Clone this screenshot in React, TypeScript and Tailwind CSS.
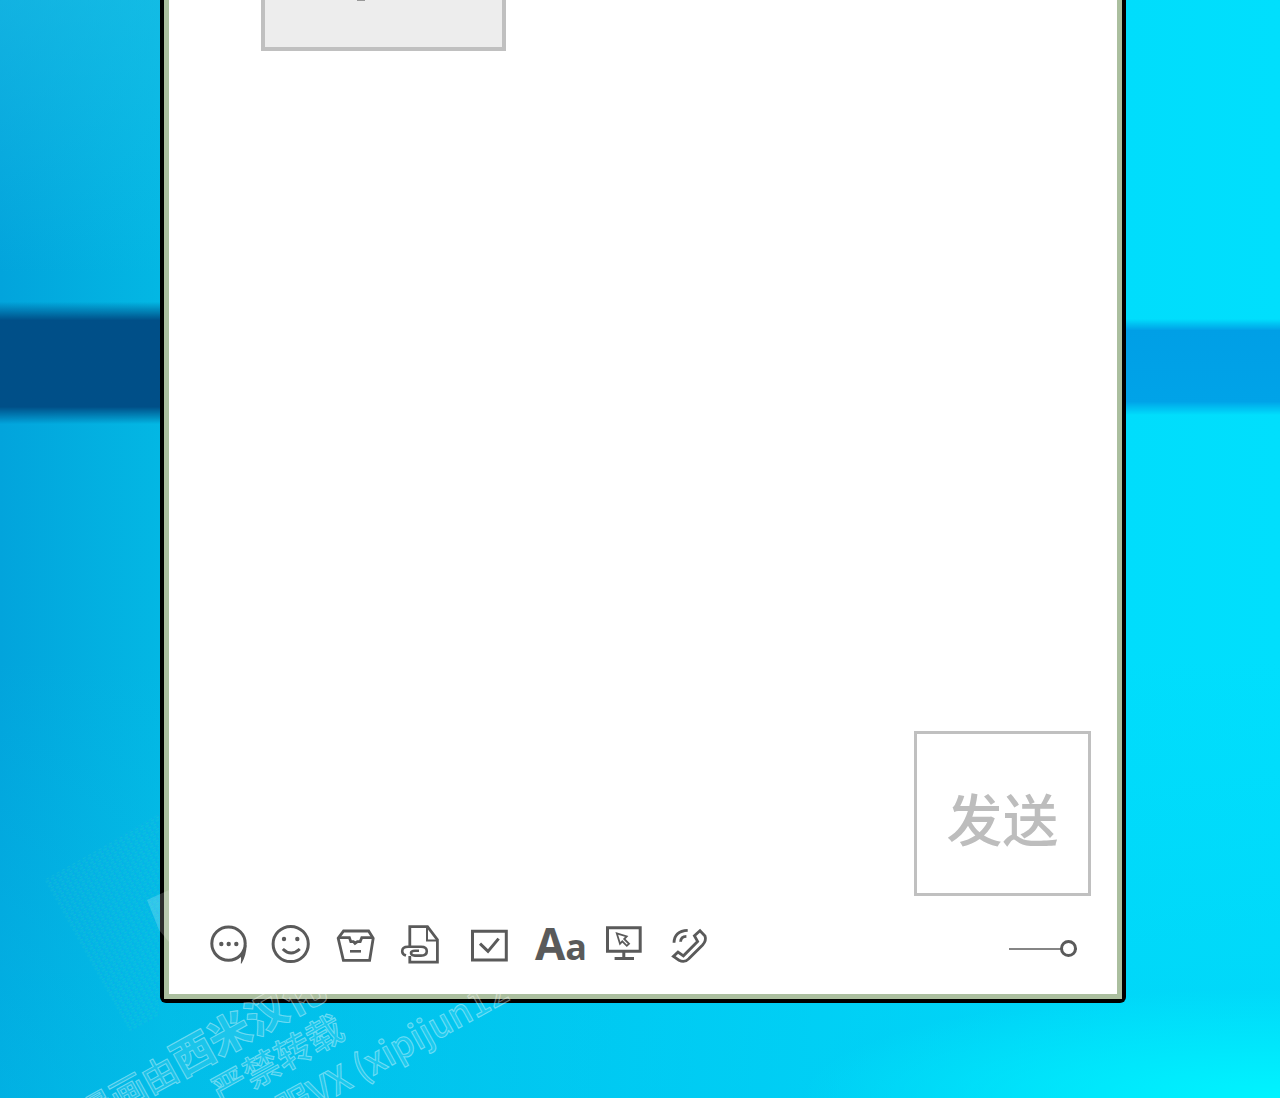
import React, { useState } from 'react';

interface ToolProps {
    label: string;
    className: string;
    children: React.ReactNode;
}

const ToolButton: React.FC<ToolProps> = ({ label, className, children }) => (
    <button
        type="button"
        aria-label={label}
        title={label}
        className={`${className} h-12 shrink-0 cursor-pointer text-[#5a5a5a]`}
    >
        {children}
    </button>
);

const ChatIcon = () => (
    <svg viewBox="0 0 38 48" className="w-full h-12" fill="none" stroke="currentColor" strokeWidth="3">
        <circle cx="19.5" cy="22.6" r="16.7" />
        <path d="M37.6 24Q37.4 34 32.6 42.6L31.8 42.4Q32.6 38 31.6 34.500L35 26Z" fill="currentColor" stroke="none" />
        <g fill="currentColor" stroke="none">
            <circle cx="12.3" cy="23" r="2.2" />
            <circle cx="19.7" cy="23" r="2.2" />
            <circle cx="27.3" cy="23" r="2.2" />
        </g>
    </svg>
);

const SmileIcon = () => (
    <svg viewBox="0 0 40 48" className="w-10 h-12" fill="none" stroke="currentColor" strokeWidth="3">
        <circle cx="19.7" cy="23" r="17.6" />
        <path d="M11.8 28Q20 36 28.8 28" />
        <circle cx="13" cy="18" r="2.2" fill="currentColor" stroke="none" />
        <circle cx="26.3" cy="18" r="2.2" fill="currentColor" stroke="none" />
    </svg>
);

const BoxIcon = () => (
    <svg viewBox="0 0 40 48" className="w-10 h-12" fill="none" stroke="currentColor" strokeWidth="2.8">
        <path d="M3.2 17.2L8.6 10H33.6L38.2 17.2L34.6 39.4H8.4Z" />
        <path d="M3.2 16.6H14.4L15.8 20.6H18.4L20 22.4L22.4 20.6H25.2L26.8 16.6H38" />
        <path d="M15 30.3H26" strokeWidth="2.6" />
    </svg>
);

const FileLinkIcon = () => (
    <svg viewBox="0 0 44 48" className="w-11 h-12" fill="none" stroke="currentColor" strokeWidth="2.8">
        <path d="M10.8 26V5.6H28.5L38.4 18.6V41.2H10.8V35" />
        <path d="M28 6V19.6H38" strokeWidth="2" />
        <path d="M7 34.6Q3.2 33.4 3.2 30.2Q3.2 25.8 9 25.8H22Q27.8 25.8 27.8 30.2Q27.8 34.6 22 34.6H16Q12 34.4 12 32Q12 29.8 16 29.8H20" strokeWidth="2.6" />
    </svg>
);

const CheckIcon = () => (
    <svg viewBox="0 0 44 48" className="w-11 h-12" fill="none" stroke="currentColor" strokeWidth="3">
        <path d="M5.5 10.2H39.3V39H5.5Z" />
        <path d="M13 22.6L21 30.4L31.6 17.6" />
    </svg>
);

const ScreenIcon = () => (
    <svg viewBox="0 0 40 48" className="w-10 h-12" fill="none" stroke="currentColor" strokeWidth="3">
        <path d="M2.5 6.8H35.2V30.2H2.5Z" />
        <path d="M18.8 31V37M9.6 37.4H29" />
        <path d="M11.8 12.4L21.7 15.5L19.2 18L24 22.8L21.8 24.8L17.3 20.4L15 22.8Z" strokeWidth="1.8" />
    </svg>
);

const PhoneIcon = () => (
    <svg viewBox="0 0 40 48" className="w-10 h-12" fill="none" stroke="currentColor" strokeWidth="2.8">
        <path d="M31 9.8L36 15Q37.6 19.6 33.6 24L20 37.6Q15.6 42.2 10 39.2L4.4 35.4L9 31L14.4 34.8L28.6 20.4L25.4 14.8Z" />
        <path d="M5 21.7Q5.4 10 18.7 9.4M11.6 20.8Q11.8 15.6 17.4 15.4" />
    </svg>
);

const Watermark = () => (
    <>
        {/* scattered code print */}
        <svg
            aria-hidden="true"
            viewBox="0 0 130 240"
            className="absolute left-10 bottom-12 w-[130px] h-[240px] pointer-events-none"
        >
            <defs>
                <pattern id="grain" width="6" height="5" patternUnits="userSpaceOnUse" patternTransform="rotate(-29)">
                    <path d="M0 1H4M2 3.500H5" stroke="#39d6c4" strokeWidth="1" opacity="0.22" />
                    <path d="M4.500 1V3" stroke="#2f7dff" strokeWidth="1" opacity="0.22" />
                </pattern>
            </defs>
            <path d="M4 70L119 4V206L90 222Z" fill="url(#grain)" />
            <path d="M107 90L129 80V132L119 120Z" fill="#fff" opacity="0.18" />
        </svg>
        <div
            aria-hidden="true"
            className="absolute left-17 -bottom-[137px] origin-top-left -rotate-29 pointer-events-none select-none whitespace-nowrap font-['Noto_Sans_CJK_SC',sans-serif] font-medium text-white/10 [-webkit-text-stroke:1px_rgba(255,255,255,0.4)]"
        >
            <p className="text-[36px] leading-11">漫画由<span className="text-[42px] font-black">西米汉化</span></p>
            <p className="pl-32 text-[36px] leading-11">严禁转载</p>
            <p className="pl-35 text-[36px] leading-[50px]">客服VX (xipijun12</p>
        </div>
    </>
);

export default function App() {
    const [draft, setDraft] = useState('');
    const [opacity, setOpacity] = useState(100);

    return (
        <main className="relative min-h-screen overflow-hidden grid grid-cols-[160px_1fr_154px] bg-[radial-gradient(ellipse_480px_110px_at_100%_100%,#00f4ff,transparent),linear-gradient(to_bottom,transparent_60%,rgba(0,200,240,0.35)),linear-gradient(to_right,#02a4dc,#03b8e4_13%,#00ccf4_50%,#00ddfc_88%,#00dffd)]">
            {/* wallpaper left of the window */}
            <div className="bg-linear-to-b from-[#22c0e6]/50 to-transparent to-25%">
                <div className="h-[302px]" />
                <div className="h-[122px] bg-linear-to-b from-transparent via-[#004f88] via-15% to-[#004f88] to-84% mask-b-from-86% mask-b-to-100%" />
            </div>

            <section className="mb-[95px] flex flex-col rounded-b-md border-4 border-t-0 border-black bg-white">
                <div className="flex-1 flex flex-col border-[5px] border-t-0 border-[#abbf9f]">
                    <div className="flex-1 pl-[92px]">
                        <div className="w-[245px] h-[51px] pl-[92px] border-4 border-t-0 border-[#c0c0c0] bg-[#ededed]">
                            <div className="w-2 h-px bg-[#999]" />
                        </div>
                    </div>

                    <form className="flex gap-6 pl-10 pr-[26px] pb-[25px]" onSubmit={e => e.preventDefault()}>
                        <textarea
                            aria-label="消息"
                            value={draft}
                            onChange={e => setDraft(e.target.value)}
                            className="flex-1 resize-none outline-none text-2xl"
                        />
                        <button
                            type="submit"
                            className="w-[177px] h-[165px] pt-1.5 border-3 border-[#c0c0c0] text-[56px] leading-none font-medium text-[#bdbdbd] font-['Noto_Sans_CJK_SC',sans-serif] cursor-pointer"
                        >
                            发送
                        </button>
                    </form>

                    <div className="flex items-end justify-between px-10 pb-[25px]">
                        <div className="flex gap-6">
                            <ToolButton label="聊天" className="w-[38px]"><ChatIcon /></ToolButton>
                            <ToolButton label="表情" className="w-10"><SmileIcon /></ToolButton>
                            <ToolButton label="收纳" className="w-10"><BoxIcon /></ToolButton>
                            <ToolButton label="文件" className="w-11"><FileLinkIcon /></ToolButton>
                            <ToolButton label="任务" className="w-11"><CheckIcon /></ToolButton>
                            <ToolButton label="字体" className="w-[46px] pb-1">
                                <span className="flex items-baseline font-['Open_Sans',sans-serif] text-[44px] leading-11 font-bold">
                                    A<span className="text-[36px]">a</span>
                                </span>
                            </ToolButton>
                            <ToolButton label="屏幕共享" className="w-10"><ScreenIcon /></ToolButton>
                            <ToolButton label="通话" className="w-10"><PhoneIcon /></ToolButton>
                        </div>
                        <input
                            type="range"
                            aria-label="透明度"
                            value={opacity}
                            onChange={e => setOpacity(Number(e.target.value))}
                            className="w-[68px] h-10 appearance-none bg-transparent cursor-pointer [&::-webkit-slider-runnable-track]:h-0.5 [&::-webkit-slider-runnable-track]:bg-[#858585] [&::-webkit-slider-thumb]:appearance-none [&::-webkit-slider-thumb]:size-[17px] [&::-webkit-slider-thumb]:-mt-2 [&::-webkit-slider-thumb]:rounded-full [&::-webkit-slider-thumb]:border-3 [&::-webkit-slider-thumb]:border-[#5a5a5a] [&::-webkit-slider-thumb]:bg-white"
                        />
                    </div>
                </div>
            </section>

            {/* wallpaper right of the window */}
            <div>
                <div className="h-[319px]" />
                <div className="h-24 bg-linear-to-b from-transparent via-[#009fe6] via-12% to-[#00a3e8] to-86% mask-b-from-86% mask-b-to-100%" />
            </div>

            <Watermark />
        </main>
    );
}
